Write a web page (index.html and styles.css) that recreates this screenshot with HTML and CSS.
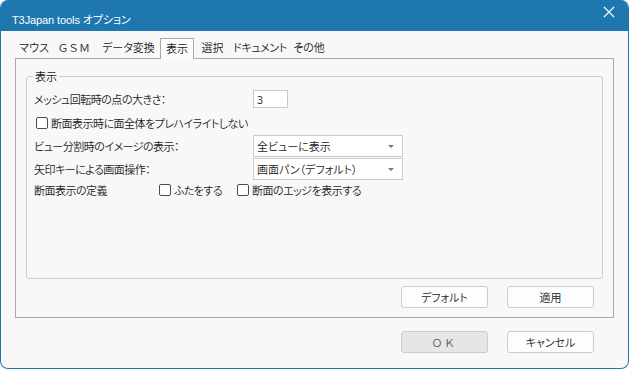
FILE: index.html
```html
<!DOCTYPE html>
<html lang="ja">
<head>
<meta charset="utf-8">
<link rel="stylesheet" href="styles.css">
</head>
<body>
<div class="window">
  <div class="titlebar">
    <span class="title">T3Japan tools オプション</span>
    <svg class="close" width="12" height="12" viewBox="0 0 12 12"><path d="M1 1L11 11M11 1L1 11" stroke="#fff" stroke-width="1.1" fill="none"/></svg>
  </div>
  <div class="content">
    <div class="tabs">
      <div class="tab t1">マウス</div>
      <div class="tab t2">ＧＳＭ</div>
      <div class="tab t3">データ変換</div>
      <div class="tab t4 active">表示</div>
      <div class="tab t5">選択</div>
      <div class="tab t6">ドキュメント</div>
      <div class="tab t7">その他</div>
    </div>
    <div class="panel">
      <fieldset class="group">
        <legend>表示</legend>
        <div class="row r1">
          <span class="label">メッシュ回転時の点の大きさ：</span>
          <span class="input">3</span>
        </div>
        <div class="row r2">
          <span class="check"><span class="box"></span>断面表示時に面全体をプレハイライトしない</span>
        </div>
        <div class="row r3">
          <span class="label">ビュー分割時のイメージの表示：</span>
          <span class="combo"><span>全ビューに表示</span><span class="arrow"></span></span>
        </div>
        <div class="row r4">
          <span class="label">矢印キーによる画面操作：</span>
          <span class="combo"><span>画面パン（デフォルト）</span><span class="arrow"></span></span>
        </div>
        <div class="row r5">
          <span class="label short">断面表示の定義</span>
          <span class="check c1"><span class="box"></span>ふたをする</span>
          <span class="check"><span class="box"></span>断面のエッジを表示する</span>
        </div>
      </fieldset>
      <div class="buttons">
        <div class="btn">デフォルト</div>
        <div class="btn">適用</div>
      </div>
    </div>
    <div class="buttons bottom">
      <div class="btn ok">ＯＫ</div>
      <div class="btn">キャンセル</div>
    </div>
  </div>
</div>
</body>
</html>
```
FILE: styles.css
```css
html, body {
  margin: 0;
  padding: 0;
  background: #ffffff;
}
body {
  font-family: "Noto Sans CJK JP", "Noto Sans", sans-serif;
  font-size: 11px;
  font-weight: 350;
  color: #1b1b1b;
  font-feature-settings: "palt";
}
.window {
  width: 629px;
  height: 369px;
  box-sizing: border-box;
  border: 1px solid #1f77b0;
  border-top: none;
  border-radius: 8px;
  overflow: hidden;
  background: #f8f8f8;
  display: flex;
  flex-direction: column;
}
.titlebar {
  height: 31px;
  flex: none;
  background: #1f77b0;
  color: #ffffff;
  display: flex;
  align-items: center;
  justify-content: space-between;
  padding: 0 13px 0 11px;
  box-sizing: border-box;
}
.title {
  font-family: "Liberation Sans", "Noto Sans CJK JP", sans-serif;
  font-weight: 400;
  font-size: 11px;
  line-height: 16px;
  margin-top: 8px;
  letter-spacing: -0.1px;
}
.close {
  display: block;
  margin-top: -7px;
}
.content {
  flex: 1;
  padding: 7px 0 0 14px;
  display: flex;
  flex-direction: column;
}
.tabs {
  display: flex;
  height: 20px;
  padding-left: 0;
}
.tab {
  box-sizing: border-box;
  height: 20px;
  line-height: 19px;
  text-align: center;
  color: #1b1b1b;
  white-space: nowrap;
}
.t1 { width: 38px; }
.t2 { width: 44px; letter-spacing: 1.5px; }
.t3 { width: 63px; }
.t4 { width: 34px; }
.t5 { width: 37px; }
.t6 { width: 58px; letter-spacing: -0.4px; }
.t7 { width: 40px; }
.tab.active {
  border: 1px solid #a9a9a9;
  border-bottom: none;
  background: #fcfcfc;
  line-height: 18px;
  position: relative;
  z-index: 1;
  height: 21px;
}
.panel {
  width: 599px;
  height: 260px;
  box-sizing: border-box;
  border: 1px solid #acacac;
  padding: 9px 10px 9px 10px;
  display: flex;
  flex-direction: column;
}
.group {
  margin: 0;
  flex: 1;
  border: 1px solid #cdcdcd;
  border-radius: 3px;
  padding: 0 7px;
  min-width: 0;
  letter-spacing: -0.5px;
}
.group legend {
  padding: 0 2px;
  margin-left: -1px;
  line-height: 16px;
  height: 16px;
  letter-spacing: 0;
}
.row {
  display: flex;
  align-items: center;
  white-space: nowrap;
}
.label {
  width: 219px;
  flex: none;
}
.label.short { width: 125px; }
.r1 { height: 18px; margin-top: 6px; }
.r2 { height: 16px; margin-top: 7px; }
.r3 { height: 22px; margin-top: 4px; }
.r4 { height: 22px; margin-top: 1px; }
.r5 { height: 16px; margin-top: 2px; }
.input {
  width: 35px;
  height: 18px;
  box-sizing: border-box;
  border: 1px solid #c8c8c8;
  background: #ffffff;
  padding-left: 3px;
  line-height: 16px;
}
.check {
  display: flex;
  align-items: center;
}
.r2 .check { margin-left: 2px; }
.check.c1 { width: 78px; }
.box {
  width: 12px;
  height: 12px;
  box-sizing: border-box;
  border: 1px solid #4d4d4d;
  border-radius: 2px;
  background: #ffffff;
  margin-right: 3px;
  flex: none;
}
.combo {
  width: 150px;
  height: 22px;
  box-sizing: border-box;
  border: 1px solid #cccccc;
  background: #ffffff;
  display: flex;
  align-items: center;
  justify-content: space-between;
  padding: 0 8px 0 3px;
  letter-spacing: 0;
}
.arrow {
  width: 0;
  height: 0;
  border-left: 3px solid transparent;
  border-right: 3px solid transparent;
  border-top: 3px solid #7a7a7a;
}
.buttons {
  display: flex;
  justify-content: flex-end;
  gap: 19px;
  margin-top: 7px;
  padding-right: 9px;
}
.buttons.bottom {
  margin-top: 13px;
  width: 599px;
  box-sizing: border-box;
  padding-right: 20px;
}
.btn {
  width: 87px;
  height: 22px;
  box-sizing: border-box;
  border: 1px solid #cccccc;
  border-radius: 3px;
  background: #fdfdfd;
  text-align: center;
  line-height: 20px;
}
.btn.ok {
  background: #e6e6e6;
  color: #5a5a5a;
  letter-spacing: 3px;
}
```
